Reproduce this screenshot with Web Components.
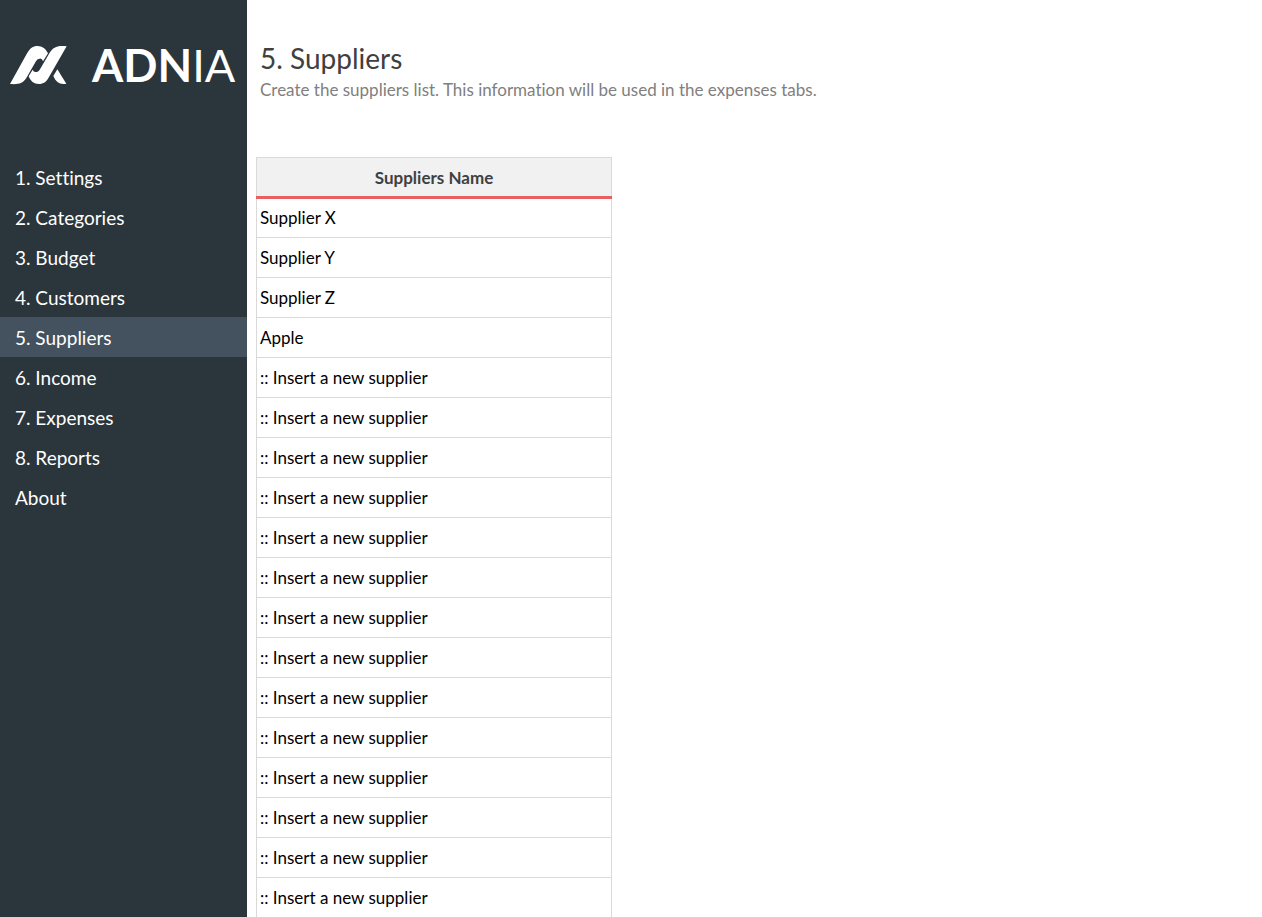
<!DOCTYPE html>
<html lang="en">
<head>
<meta charset="utf-8">
<title>Suppliers</title>
<style>
body { margin: 0; background: #fff; font-family: Lato, "Liberation Sans", sans-serif; font-variant-ligatures: none; }
</style>
</head>
<body>
<app-shell>
  <side-nav slot="nav">
    <brand-logo slot="brand"></brand-logo>
    <nav-item>1. Settings</nav-item>
    <nav-item>2. Categories</nav-item>
    <nav-item>3. Budget</nav-item>
    <nav-item>4. Customers</nav-item>
    <nav-item active>5. Suppliers</nav-item>
    <nav-item>6. Income</nav-item>
    <nav-item>7. Expenses</nav-item>
    <nav-item>8. Reports</nav-item>
    <nav-item>About</nav-item>
  </side-nav>
  <page-heading>
    <span slot="title">5. Suppliers</span>
    <span slot="description">Create the suppliers list. This information will be used in the expenses tabs.</span>
  </page-heading>
  <supplier-table rows="18"></supplier-table>
</app-shell>

<script>
class BaseElement extends HTMLElement {
  constructor() {
    super();
    this.attachShadow({ mode: "open" });
  }
  connectedCallback() {
    this.shadowRoot.innerHTML = this.render();
  }
}

class AppShell extends BaseElement {
  render() {
    return `<style>
      :host { display: grid; grid-template-columns: 247px minmax(0, 1fr); min-height: 100vh; }
      main { padding-left: 9px; }
    </style>
    <slot name="nav"></slot>
    <main><slot></slot></main>`;
  }
}

class BrandLogo extends BaseElement {
  render() {
    return `<style>
      :host { display: flex; align-items: center; gap: 24px; height: 40px; color: #fff; }
      svg { flex: none; width: 58px; height: 40px; }
      span { font-size: 45px; line-height: 40px; font-weight: 700; white-space: nowrap; }
      i { font-style: normal; font-weight: 400; }
    </style>
    <svg viewBox="30 30 174 120" fill="currentColor" aria-hidden="true">
      <path d="M30 147 L80 57 C90 39 99 33 112 33 C128 33 137 42 144 55 L129 79 Q126 69 119 71 Q112 70 107 80 L79 129 C69 145 56 149 30 147Z"/>
      <path d="M200 34 L147 126 C139 141 130 147 117 147 C101 147 92 139 86 124 L98 104 Q101 113 109 111 Q115 113 120 103 L149 53 C160 36 173 30 200 34Z"/>
      <path d="M172 103 L199 146 C180 150 168 142 160 123Z"/>
    </svg>
    <span>ADN<i>IA</i></span>`;
  }
}

class SideNav extends BaseElement {
  render() {
    return `<style>
      :host { display: block; background: #2b353c; color: #fff; }
      header { padding: 45px 0 72px 10px; }
    </style>
    <header><slot name="brand"></slot></header>
    <nav><slot></slot></nav>`;
  }
}

class NavItem extends BaseElement {
  render() {
    return `<style>
      :host { display: block; }
      :host([active]) { background: #44525f; }
      a { display: block; padding: 2px 15px 0; font-size: 19px; line-height: 38px; color: inherit; text-decoration: none; }
    </style>
    <a href="#"${this.hasAttribute("active") ? ' aria-current="page"' : ""}><slot></slot></a>`;
  }
}

class PageHeading extends BaseElement {
  render() {
    return `<style>
      :host { display: block; padding: 39px 4px 54px; }
      h1 { margin: 0; font-size: 28px; line-height: 38px; font-weight: 400; color: #404040; }
      p { margin: 0; font-size: 17px; line-height: 26px; color: #808080; }
    </style>
    <h1><slot name="title"></slot></h1>
    <p><slot name="description"></slot></p>`;
  }
}

class SupplierTable extends BaseElement {
  render() {
    const names = ["Supplier X", "Supplier Y", "Supplier Z", "Apple"];
    const count = Number(this.getAttribute("rows"));
    while (names.length < count) names.push(":: Insert a new supplier");
    return `<style>
      :host { display: block; max-width: 356px; }
      table { width: 100%; border-collapse: separate; border-spacing: 0; font-size: 17px; line-height: 20px; }
      th, td { box-sizing: border-box; height: 40px; border: 0 solid #d9d9d9; }
      th { height: 42px; padding: 0; background: #f1f1f1; color: #404040; font-weight: 700; box-shadow: inset 0 -3px #e8605f, inset 1px 1px #d9d9d9, inset -1px 0 #d9d9d9; }
      td { padding: 0 3px; border-width: 0 1px 1px; color: #000; }
      tbody tr:first-child td, tbody tr:last-child td { height: 39px; }
      tbody tr:last-child td { border-bottom: 0; }
    </style>
    <table>
      <thead><tr><th scope="col">Suppliers Name</th></tr></thead>
      <tbody>${names.map(name => `<tr><td>${name}</td></tr>`).join("")}</tbody>
    </table>`;
  }
}

customElements.define("app-shell", AppShell);
customElements.define("brand-logo", BrandLogo);
customElements.define("side-nav", SideNav);
customElements.define("nav-item", NavItem);
customElements.define("page-heading", PageHeading);
customElements.define("supplier-table", SupplierTable);
</script>
</body>
</html>
